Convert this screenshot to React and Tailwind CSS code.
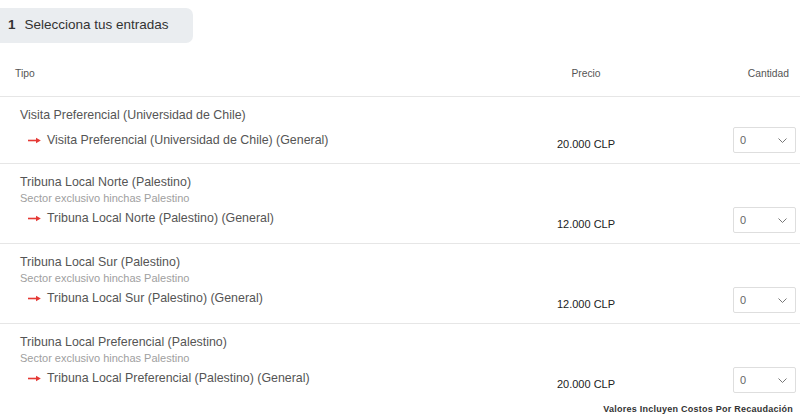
import React from 'react'

const rows = [
  { title: 'Visita Preferencial (Universidad de Chile)', sub: null, item: 'Visita Preferencial (Universidad de Chile) (General)', price: '20.000 CLP' },
  { title: 'Tribuna Local Norte (Palestino)', sub: 'Sector exclusivo hinchas Palestino', item: 'Tribuna Local Norte (Palestino) (General)', price: '12.000 CLP' },
  { title: 'Tribuna Local Sur (Palestino)', sub: 'Sector exclusivo hinchas Palestino', item: 'Tribuna Local Sur (Palestino) (General)', price: '12.000 CLP' },
  { title: 'Tribuna Local Preferencial (Palestino)', sub: 'Sector exclusivo hinchas Palestino', item: 'Tribuna Local Preferencial (Palestino) (General)', price: '20.000 CLP' },
]

function RedArrow() {
  return (
    <svg width="13" height="7" viewBox="0 0 13 7" className="shrink-0">
      <line x1="0" y1="3.5" x2="9" y2="3.5" stroke="#e53935" strokeWidth="1.6" />
      <path d="M8 0.8 L12.8 3.5 L8 6.2 Z" fill="#e53935" />
    </svg>
  )
}

function QtySelect() {
  return (
    <div className="flex h-[26px] w-[63px] items-center justify-between rounded-[2px] border border-[#dedede] bg-white pl-[6px] pr-[8px]">
      <span className="text-[11px] text-[#666]">0</span>
      <svg width="9" height="5" viewBox="0 0 9 5">
        <polyline points="0.5,0.5 4.5,4.5 8.5,0.5" fill="none" stroke="#777" strokeWidth="1" />
      </svg>
    </div>
  )
}

function TicketRow({ row, last }) {
  return (
    <div className={'flex items-end pt-[9px] pb-[10px] ' + (last ? '' : 'border-b border-[#e6e6e6]')}>
      <div className={'flex-1 pl-[20px] ' + (row.sub ? 'pb-[6px]' : 'pb-[4px]')}>
        <div className="text-[12.4px] leading-[18px] text-[#555]">{row.title}</div>
        {row.sub && (
          <div className="-mt-px text-[11px] leading-[16px] text-[#a0a0a0]">{row.sub}</div>
        )}
        <div className={'flex items-center pl-[8px] ' + (row.sub ? 'mt-[3px]' : 'mt-[7px]')}>
          <RedArrow />
          <span className="ml-[6px] text-[12.4px] leading-[18px] text-[#555]">{row.item}</span>
        </div>
      </div>
      <div className="mb-px w-[120px] text-center text-[11px] leading-[16px] font-medium text-[#222]">
        {row.price}
      </div>
      <div className="flex w-[154px] justify-end pr-[4px]">
        <QtySelect />
      </div>
    </div>
  )
}

export default function App() {
  return (
    <div className="h-[420px] w-[800px] overflow-hidden bg-white" style={{ fontFamily: '"Liberation Sans", Arial, sans-serif' }}>
      <div className="mt-[8px] flex h-[35px] w-[193px] items-center rounded-r-[7px] bg-[#eaedf0] pl-[8px] text-[13.5px] text-[#333]">
        <span className="font-bold">1</span>
        <span className="ml-[9px]">Selecciona tus entradas</span>
      </div>

      <div className="mt-[9px] flex h-[45px] items-center border-b border-[#e6e6e6] text-[10.3px] text-[#555]">
        <div className="flex-1 pl-[15px]">Tipo</div>
        <div className="w-[120px] text-center">Precio</div>
        <div className="w-[154px] pr-[11px] text-right">Cantidad</div>
      </div>

      {rows.map((row, i) => (
        <TicketRow key={i} row={row} last={i === rows.length - 1} />
      ))}

      <div className="pr-[7px] text-right text-[9px] leading-[12px] font-bold tracking-[0.25px] text-[#333]">
        Valores Incluyen Costos Por Recaudación
      </div>
    </div>
  )
}
